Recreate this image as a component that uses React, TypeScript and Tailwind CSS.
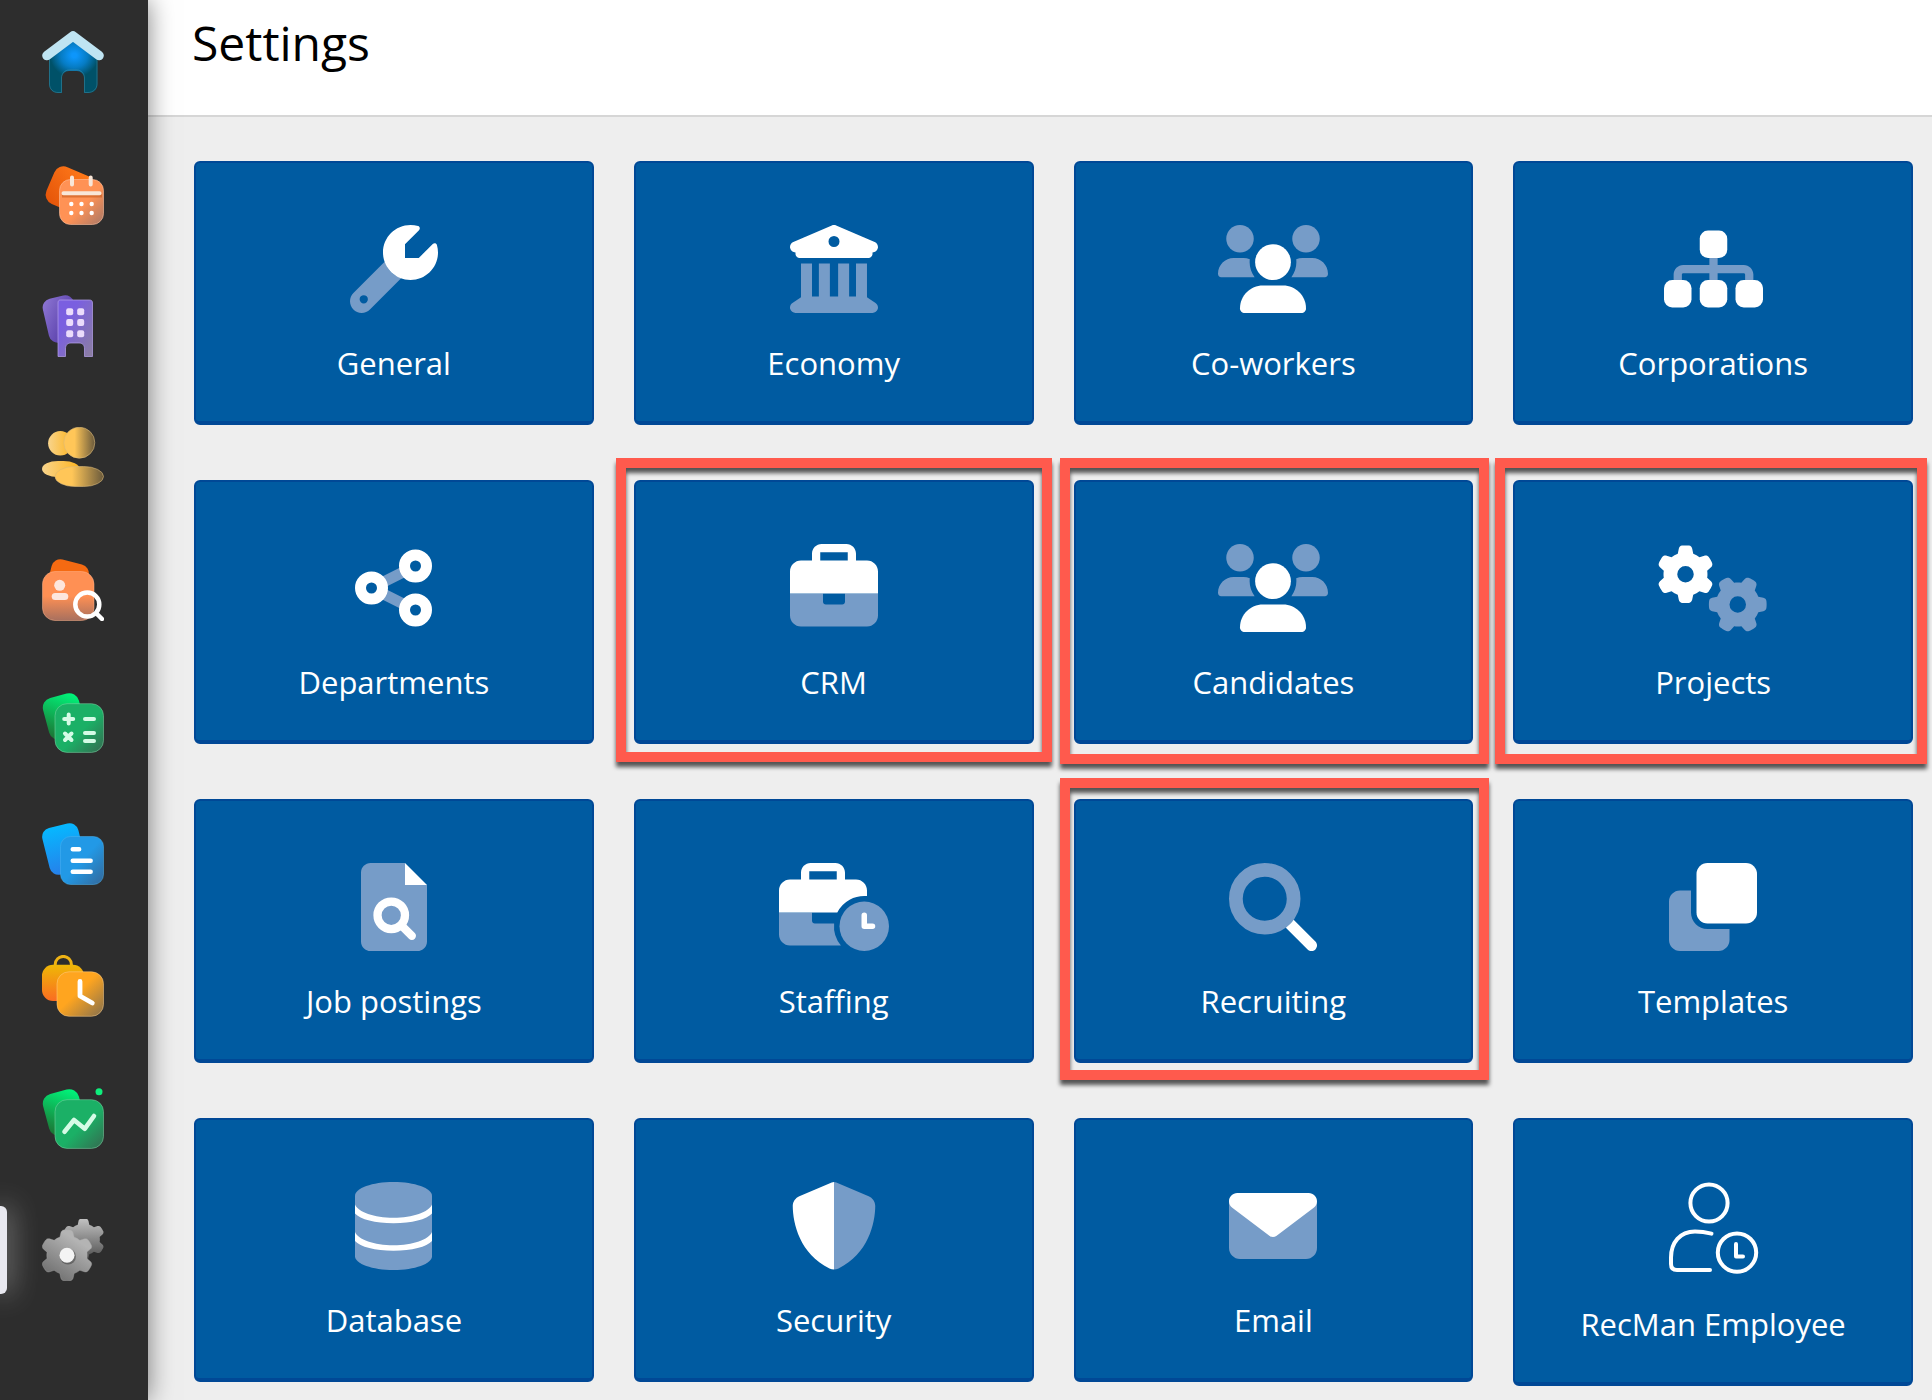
import type { ReactNode } from "react";
import clsx from "clsx";

const GEAR =
  "M308.5 135.3c7.1-6.3 9.9-16.2 6.2-25c-2.3-5.3-4.8-10.5-7.6-15.5L304 89.4c-3-5-6.3-9.9-9.8-14.6c-5.7-7.6-15.7-10.1-24.7-7.1l-28.2 9.3c-10.7-8.8-23-16-36.2-20.9L199 27.1c-1.9-9.3-9.1-16.7-18.5-17.8C173.9 8.4 167.2 8 160.4 8h-.7c-6.8 0-13.5 .4-20.1 1.2c-9.4 1.1-16.6 8.6-18.5 17.8L115 56.1c-13.3 5-25.5 12.1-36.2 20.9L50.5 67.8c-9-3-19-.5-24.7 7.1c-3.5 4.7-6.8 9.6-9.9 14.6l-3 5.3c-2.8 5-5.3 10.2-7.6 15.6c-3.7 8.7-.9 18.6 6.2 25l22.2 19.8C32.6 161.9 32 168.9 32 176s.6 14.1 1.7 20.9L11.5 216.7c-7.1 6.3-9.9 16.2-6.2 25c2.3 5.3 4.8 10.5 7.6 15.6l3 5.2c3 5.1 6.3 9.9 9.9 14.6c5.7 7.6 15.7 10.1 24.7 7.1l28.2-9.3c10.7 8.8 23 16 36.2 20.9l6.1 29.1c1.9 9.3 9.1 16.7 18.5 17.8c6.7 .8 13.5 1.2 20.4 1.2s13.7-.4 20.4-1.2c9.4-1.1 16.6-8.6 18.5-17.8l6.1-29.1c13.3-5 25.5-12.1 36.2-20.9l28.2 9.3c9 3 19 .5 24.7-7.1c3.5-4.7 6.8-9.5 9.8-14.6l3.1-5.4c2.8-5 5.3-10.2 7.6-15.5c3.7-8.7 .9-18.6-6.2-25l-22.2-19.8c1.1-6.8 1.7-13.8 1.7-20.9s-.6-14.1-1.7-20.9l22.2-19.8z";
const GEAR_HOLE = "M112 176a48 48 0 1 0 96 0 48 48 0 1 0 -96 0z";

// second tone of the duotone icons
const TONE = "#769cc8";

function Duo({ width = 512, children }: { width?: number; children: ReactNode }) {
  return (
    <svg viewBox={`0 0 ${width} 512`} className="h-22 w-auto" fill="#fff" aria-hidden="true">
      {children}
    </svg>
  );
}

const wrench = (
  <Duo>
    <path
      fill={TONE}
      fillRule="evenodd"
      d="M201.5 214.5L19.9 396.1C7.2 408.8 0 426.1 0 444.1C0 481.6 30.4 512 67.9 512c18 0 35.3-7.2 48-19.9L297.5 310.5c-44-16-80-50-96-96zM80 408a24 24 0 1 1 0 48 24 24 0 1 1 0-48z"
    />
    <path d="M352 320c88.4 0 160-71.6 160-160c0-15.3-2.2-30.1-6.2-44.2c-3.1-10.8-16.4-13.2-24.3-5.3L400 192H320V112l81.5-81.5c7.9-7.9 5.4-21.2-5.3-24.3C382.1 2.2 367.3 0 352 0C263.6 0 192 71.6 192 160s71.6 160 160 160z" />
  </Duo>
);

const bank = (
  <Duo>
    <path
      fill={TONE}
      d="M128 224H64V420.3c-.6 .3-1.2 .7-1.8 1.1l-48 32c-11.7 7.8-17 22.4-12.9 35.9S17.9 512 32 512H480c14.1 0 26.5-9.2 30.6-22.7s-1.1-28.1-12.9-35.9l-48-32c-.6-.4-1.2-.7-1.8-1.1V224H384V416H344V224H280V416H232V224H168V416H128V224z"
    />
    <path
      fillRule="evenodd"
      d="M243.4 2.6l-224 96c-14 6-21.8 21-18.7 35.8S16.8 160 32 160v8c0 13.3 10.7 24 24 24H456c13.3 0 24-10.7 24-24v-8c15.2 0 28.3-10.7 31.3-25.6s-4.8-29.9-18.7-35.8l-224-96c-8-3.4-17.2-3.4-25.2 0zM256 64a32 32 0 1 1 0 64 32 32 0 1 1 0-64z"
    />
  </Duo>
);

const people = (
  <Duo width={640}>
    <g fill={TONE}>
      <circle cx="128" cy="80" r="80" />
      <circle cx="512" cy="80" r="80" />
      <path d="M0 283.4C0 233 40.8 192 91.4 192H148c13 0 25.6 2.7 36.9 7.6c-.6 5.5-.9 11-.9 16.6c0 32 11 61 29 87.8H18.3C8.2 304 0 295 0 283.4z" />
      <path d="M640 283.4C640 233 599.2 192 548.6 192H492c-13 0-25.6 2.7-36.9 7.6c.6 5.5 .9 11 .9 16.6c0 32-11 61-29 87.8H621.7C631.8 304 640 295 640 283.4z" />
    </g>
    <circle cx="320" cy="216" r="104" />
    <path d="M128 485.3C128 411.7 187.7 352 261.3 352H378.7C452.3 352 512 411.7 512 485.3c0 14.7-11.9 26.7-26.7 26.7H154.7c-14.7 0-26.7-11.9-26.7-26.7z" />
  </Duo>
);

const sitemap = (
  <Duo width={576}>
    <path
      fill={TONE}
      d="M264 180h48v52h152c30.9 0 56 25.1 56 56v44h-48v-44c0-4.4-3.6-8-8-8H312v52h-48v-52H112c-4.4 0-8 3.6-8 8v44H56v-44c0-30.9 25.1-56 56-56h152z"
    />
    <rect x="208" y="32" width="160" height="160" rx="48" />
    <rect x="0" y="320" width="160" height="160" rx="48" />
    <rect x="208" y="320" width="160" height="160" rx="48" />
    <rect x="416" y="320" width="160" height="160" rx="48" />
  </Duo>
);

const nodes = (
  <Duo width={448}>
    <path d="M167 220L280 164M167 292L280 348" stroke={TONE} strokeWidth="64" />
    <g fill="none" stroke="#fff" strokeWidth="64">
      <circle cx="96" cy="256" r="64" />
      <circle cx="352" cy="128" r="64" />
      <circle cx="352" cy="384" r="64" />
    </g>
  </Duo>
);

const briefcase = (
  <Duo>
    <path
      fill={TONE}
      d="M0 288h192v48c0 8.8 7.2 16 16 16h96c8.8 0 16-7.2 16-16v-48h192v128c0 35.3-28.7 64-64 64H64c-35.3 0-64-28.7-64-64z"
    />
    <path
      fillRule="evenodd"
      d="M176 48H336V96H176zM128 56V96H64C28.7 96 0 124.7 0 160v128h512V160c0-35.3-28.7-64-64-64H384V56c0-30.9-25.1-56-56-56H184c-30.9 0-56 25.1-56 56z"
    />
  </Duo>
);

const gears = (
  <Duo width={640}>
    <path fillRule="evenodd" d={GEAR + GEAR_HOLE} />
    <path fill={TONE} fillRule="evenodd" transform="translate(464 352) rotate(90) translate(-160 -176)" d={GEAR + GEAR_HOLE} />
  </Duo>
);

const fileSearch = (
  <Duo width={384}>
    <path fill={TONE} d="M0 56C0 25 25 0 56 0H256V128H384V456c0 31-25 56-56 56H56c-31 0-56-25-56-56z" />
    <path d="M256 0V128H384z" />
    <circle cx="176" cy="304" r="80" fill="none" stroke="#fff" strokeWidth="48" />
    <path d="M236 364l60 60" stroke="#fff" strokeWidth="48" strokeLinecap="round" />
  </Duo>
);

const briefcaseClock = (
  <Duo width={640}>
    <path
      fill={TONE}
      d="M0 288h192v48c0 8.8 7.2 16 16 16h112.7A176 176 0 0 0 360.2 480H64c-35.3 0-64-28.7-64-64z"
    />
    <path
      fillRule="evenodd"
      d="M176 48H336V96H176zM128 56V96H64C28.7 96 0 124.7 0 160v128H339.2A176 176 0 0 1 512 192.7V160c0-35.3-28.7-64-64-64H384V56c0-30.9-25.1-56-56-56H184c-30.9 0-56 25.1-56 56z"
    />
    <circle cx="496" cy="368" r="144" fill={TONE} />
    <path d="M496 304v64h48" fill="none" stroke="#fff" strokeWidth="32" strokeLinecap="round" strokeLinejoin="round" />
  </Duo>
);

const magnifier = (
  <Duo>
    <circle cx="208" cy="208" r="168" fill="none" stroke={TONE} strokeWidth="80" />
    <path d="M330.7 376L457.4 502.6c12.5 12.5 32.8 12.5 45.3 0s12.5-32.8 0-45.3L376 330.7C363.3 348 348 363.3 330.7 376z" />
  </Duo>
);

const clone = (
  <Duo>
    <path
      fill={TONE}
      d="M64 160h64v128c0 53 43 96 96 96h128v64c0 35.3-28.7 64-64 64H64c-35.3 0-64-28.7-64-64V224c0-35.3 28.7-64 64-64z"
    />
    <rect x="160" y="0" width="352" height="352" rx="64" />
  </Duo>
);

const database = (
  <Duo width={448}>
    <path fill={TONE} d="M0 80C0 35.8 100.3 0 224 0s224 35.8 224 80v352c0 44.2-100.3 80-224 80S0 476.2 0 432z" />
    <path d="M0 131C18 176 112 208 224 208s206-32 224-77v52c-30 34-118 57-224 57S30 217 0 183z" />
    <path d="M0 291C18 336 112 368 224 368s206-32 224-77v52c-30 34-118 57-224 57S30 377 0 343z" />
  </Duo>
);

const shield = (
  <Duo>
    <path fill={TONE} d="M256 0c4.7 0 9.2 1 13.4 2.9L457.7 82.8c22 9.3 38.4 31 38.3 57.2c-.5 99.2-41.3 280.7-213.6 363.2c-8.4 4-17.4 6-26.4 6z" />
    <path d="M256 0c-4.7 0-9.2 1-13.4 2.9L54.3 82.8c-22 9.3-38.4 31-38.3 57.2c.5 99.2 41.3 280.7 213.6 363.2c8.4 4 17.4 6 26.4 6z" />
  </Duo>
);

const envelope = (
  <Duo>
    <path fill={TONE} d="M0 112H512V384c0 35.3-28.7 64-64 64H64c-35.3 0-64-28.7-64-64z" />
    <path d="M48 64C21.5 64 0 85.5 0 112c0 15.1 7.1 29.3 19.2 38.4L236.8 313.6c11.4 8.5 27 8.5 38.4 0L492.8 150.4c12.1-9.1 19.2-23.3 19.2-38.4c0-26.5-21.5-48-48-48H48z" />
  </Duo>
);

const employee = (
  <svg
    viewBox="0 0 92 92"
    className="size-23"
    fill="none"
    stroke="#fff"
    strokeWidth="4"
    strokeLinecap="round"
    strokeLinejoin="round"
    aria-hidden="true"
  >
    <circle cx="42" cy="21" r="18.6" />
    <path d="M44.5 51.6C39 50.2 33.5 49.4 28 49.4C13 49.4 4 60.5 4 75.5V82c0 3.8 2.2 6 6 6H43" />
    <circle cx="70" cy="70.6" r="19.2" />
    <path d="M69 62v12.5h7" />
  </svg>
);

type Tile = { label: string; icon: ReactNode; frame?: string };

const TILES: Tile[] = [
  { label: "General", icon: wrench },
  { label: "Economy", icon: bank },
  { label: "Co-workers", icon: people },
  { label: "Corporations", icon: sitemap },
  { label: "Departments", icon: nodes },
  { label: "CRM", icon: briefcase, frame: "-top-6 -right-5 -bottom-[22px] -left-5" },
  { label: "Candidates", icon: people, frame: "-top-6 -right-[18px] -bottom-6 -left-4" },
  { label: "Projects", icon: gears, frame: "-top-6 -right-4 -bottom-6 -left-5" },
  { label: "Job postings", icon: fileSearch },
  { label: "Staffing", icon: briefcaseClock },
  { label: "Recruiting", icon: magnifier, frame: "-top-[23px] -right-[18px] -bottom-[21px] -left-4" },
  { label: "Templates", icon: clone },
  { label: "Database", icon: database },
  { label: "Security", icon: shield },
  { label: "Email", icon: envelope },
  { label: "RecMan Employee", icon: employee },
];

function SettingsTile({ label, icon, frame }: Tile) {
  return (
    <a
      href="#"
      className="relative flex flex-col items-center rounded-md border-2 border-b-4 border-[#004896] bg-[#005ba1] pt-[62px] pb-9 text-white"
    >
      {icon}
      <span className="mt-7 text-[31px] leading-[44px]">{label}</span>
      {frame && (
        <span
          className={clsx(
            "pointer-events-none absolute border-10 border-[#ff5a4d] drop-shadow-[0_5px_2px_rgba(0,0,0,0.65)]",
            frame,
          )}
        />
      )}
    </a>
  );
}

function Glyph({ children }: { children: ReactNode }) {
  return (
    <svg viewBox="0 0 62 62" className="size-[62px]" fill="none" aria-hidden="true">
      {children}
    </svg>
  );
}

type GradProps = { id: string; from: string; to: string; mid?: number; dir?: "d" | "v" | "h" | "u" };

function Grad({ id, from, to, mid = 0, dir = "d" }: GradProps) {
  const [x1, y1, x2, y2] = { d: [0, 0, 1, 1], v: [0, 0, 0, 1], h: [0, 0, 1, 0], u: [0.8, 0, 0.2, 1] }[dir];
  return (
    <linearGradient id={id} x1={x1} y1={y1} x2={x2} y2={y2}>
      <stop offset={mid} stopColor={from} />
      <stop offset="1" stopColor={to} />
    </linearGradient>
  );
}

const home = (
  <Glyph>
    <defs>
      <radialGradient id="home-a" cx="0.52" cy="0.32" r="0.5" gradientTransform="translate(0 .06) scale(1 .8)">
        <stop offset="0.1" stopColor="#0d96fb" />
        <stop offset="0.55" stopColor="#067cc4" />
        <stop offset="1" stopColor="#005168" />
      </radialGradient>
    </defs>
    <path
      d="M7 24L31 7L55.5 24V53c0 5-3.5 9-9 9H42V47c0-4-3.5-7-7-7h-8c-4 0-7 3-7 7v15h-4c-5 0-9-4-9-9z"
      fill="url(#home-a)"
    />
    <path
      d="M7.5 26V53c0 5 3.5 8.5 8.5 8.5h3.5V47c0-4.5 3.5-8 7.5-8h8c4 0 7.5 3.5 7.5 8v14.5H46c5 0 9-3.5 9-8.5V26"
      stroke="#4fa0b8"
      strokeOpacity="0.4"
    />
    <path d="M5 24.5L31 5L57 24.5" stroke="#bfe4f2" strokeWidth="9.6" strokeLinecap="round" strokeLinejoin="round" />
  </Glyph>
);

const calendar = (
  <Glyph>
    <defs>
      <Grad id="cal-a" from="#ff7a1a" to="#e6560a" dir="u" />
      <Grad id="cal-b" from="#ff9255" to="#a87868" mid={0.55} />
    </defs>
    <rect x="7" y="6.5" width="43" height="40" rx="10" transform="rotate(23 27 26)" fill="url(#cal-a)" />
    <rect x="17.5" y="16.5" width="44" height="45" rx="11" fill="url(#cal-b)" stroke="#ffc09c" strokeOpacity="0.6" />
    <path d="M20 33h40" stroke="#c85a1c" strokeOpacity="0.6" strokeWidth="3" />
    <path d="M30 14.5v7M48.7 14.5v7M21.5 30.3h36" stroke="#f8e6d8" strokeWidth="4" strokeLinecap="round" />
    <g fill="#fff">
      {[41, 50].map((cy) => [29.3, 39.5, 49.7].map((cx) => <circle key={`${cx}-${cy}`} cx={cx} cy={cy} r="2.2" />))}
    </g>
  </Glyph>
);

const building = (
  <Glyph>
    <defs>
      <Grad id="bld-a" from="#9079d6" to="#3f2495" />
      <Grad id="bld-b" from="#7a5fe0" to="#8c7fa0" mid={0.3} />
    </defs>
    <rect x="3.5" y="1.5" width="32" height="45" rx="9" transform="rotate(-13 19.5 24)" fill="url(#bld-a)" />
    <path
      d="M18.5 5h29c2 0 3 1 3 3v53.5H42.5V54c0-4-2-6-5.5-6h-8c-3.5 0-5.5 2-5.5 6v7.5H16V8c0-2 .8-3 2.5-3z"
      fill="url(#bld-b)"
      stroke="#b6a2ec"
      strokeOpacity="0.7"
    />
    <g fill="#ebdcfb">
      {[13.2, 24, 35.2].map((y) => [24.2, 35.2].map((x) => <rect key={`${x}-${y}`} x={x} y={y} width="7" height="7" rx="2" />))}
    </g>
  </Glyph>
);

const contacts = (
  <Glyph>
    <defs>
      <Grad id="con-a" from="#f8d48c" to="#fdb420" dir="h" />
      <Grad id="con-b" from="#ffc658" to="#6a5a3c" mid={0.35} dir="h" />
    </defs>
    <circle cx="18.3" cy="16.3" r="12.2" fill="url(#con-a)" />
    <circle cx="37.3" cy="15.7" r="15.5" fill="url(#con-b)" stroke="#d8b878" strokeOpacity="0.6" />
    <rect x="0" y="34" width="37.5" height="16" rx="16" ry="8" fill="url(#con-a)" />
    <rect x="13" y="39.5" width="48.5" height="20" rx="20" ry="10" fill="url(#con-b)" stroke="#d8b878" strokeOpacity="0.6" />
  </Glyph>
);

const candidateSearch = (
  <Glyph>
    <defs>
      <Grad id="cs-a" from="#ff9054" to="#a8705e" mid={0.5} dir="v" />
    </defs>
    <rect x="6.5" y="2.5" width="38" height="38" rx="9" transform="rotate(14 26 22)" fill="#f56a12" />
    <rect x="0.5" y="12.5" width="51.5" height="49" rx="12.5" fill="url(#cs-a)" stroke="#ffb48c" strokeOpacity="0.5" />
    <circle cx="17.7" cy="26.3" r="5.5" fill="#fde6dd" />
    <rect x="9.7" y="34" width="16.6" height="7" rx="3.5" fill="#fde6dd" />
    <circle cx="45.3" cy="45.5" r="12" stroke="#fff" strokeWidth="4.5" />
    <path d="M54.5 54.5l5.5 5.5" stroke="#fff" strokeWidth="4.5" strokeLinecap="round" />
  </Glyph>
);

// two stacked green cards, shared by the calculator and the statistics icons
function GreenCards({ id }: { id: string }) {
  return (
    <>
      <defs>
        <Grad id={`${id}-a`} from="#00f47a" to="#1c7434" dir="u" />
        <Grad id={`${id}-b`} from="#1bb066" to="#356a50" mid={0.55} />
      </defs>
      <rect x="3.5" y="4" width="37" height="43" rx="10" transform="rotate(-15 22 25.5)" fill={`url(#${id}-a)`} />
      <rect x="13" y="12.7" width="48.5" height="48.7" rx="12" fill={`url(#${id}-b)`} stroke="#7fd8a8" strokeOpacity="0.5" />
    </>
  );
}

const calculator = (
  <Glyph>
    <GreenCards id="calc" />
    <path
      d="M26.7 23.5v9M22.2 28h9M43 28h9M43 42h9M43 50h9M23 42.5l6.5 6.5M29.5 42.5L23 49"
      stroke="#d5fbe6"
      strokeWidth="4"
      strokeLinecap="round"
    />
  </Glyph>
);

const documents = (
  <Glyph>
    <defs>
      <Grad id="doc-a" from="#06b8ff" to="#2680ea" dir="v" />
      <Grad id="doc-b" from="#2299e6" to="#34689a" mid={0.5} />
    </defs>
    <rect x="3.5" y="2" width="37" height="48" rx="9" transform="rotate(-14 22 26)" fill="url(#doc-a)" />
    <rect x="18.5" y="13.5" width="43" height="48" rx="10" fill="url(#doc-b)" stroke="#4cb4f0" strokeOpacity="0.5" />
    <path d="M30.7 26.3h6.5M30.7 37.7h18M30.7 48.7h18" stroke="#fff" strokeWidth="4.4" strokeLinecap="round" />
  </Glyph>
);

const staffing = (
  <Glyph>
    <defs>
      <Grad id="stf-a" from="#efb806" to="#fa6c22" dir="v" />
      <Grad id="stf-b" from="#ffa51f" to="#85704f" mid={0.45} />
    </defs>
    <path d="M13.2 11v-1.5a8.1 8.1 0 0 1 16.2 0V11" stroke="#efb315" strokeWidth="3" />
    <rect x="0" y="9.7" width="42" height="36.3" rx="11" fill="url(#stf-a)" />
    <rect x="15" y="16.8" width="46.5" height="44.5" rx="12" fill="url(#stf-b)" stroke="#ffd08a" strokeOpacity="0.5" />
    <path d="M38 26.5V41l12.3 7" stroke="#fff" strokeWidth="4.8" strokeLinecap="round" strokeLinejoin="round" />
  </Glyph>
);

const statistics = (
  <Glyph>
    <GreenCards id="stat" />
    <circle cx="57" cy="4.7" r="3.5" fill="#0eee7c" />
    <path d="M22.5 44.7L32 33l10.7 8.8L52 29" stroke="#d5fbe6" strokeWidth="4.6" strokeLinecap="round" strokeLinejoin="round" />
  </Glyph>
);

const settings = (
  <Glyph>
    <defs>
      <Grad id="set-a" from="#c2c2c2" to="#4c4c4c" dir="v" />
      <Grad id="set-b" from="#b4b4b4" to="#6c6c6c" mid={0.2} dir="u" />
    </defs>
    <path d={GEAR} transform="translate(41.5 20.5) scale(.128 .124) translate(-160 -176)" fill="url(#set-a)" />
    <path
      d={GEAR}
      transform="translate(25 36.3) scale(.158 .152) translate(-160 -176)"
      fill="url(#set-b)"
      stroke="#a8a8a8"
      strokeOpacity="0.5"
      strokeWidth="5"
    />
    <circle cx="26" cy="37.5" r="8" fill="#000" fillOpacity="0.3" />
    <circle cx="25" cy="36.3" r="7.5" fill="#f4f4f4" />
  </Glyph>
);

const NAV = [
  { label: "Home", icon: home },
  { label: "Calendar", icon: calendar },
  { label: "Companies", icon: building },
  { label: "Contacts", icon: contacts },
  { label: "Candidates", icon: candidateSearch },
  { label: "Calculator", icon: calculator },
  { label: "Documents", icon: documents },
  { label: "Staffing", icon: staffing },
  { label: "Statistics", icon: statistics },
  { label: "Settings", icon: settings, active: true },
];

function Sidebar() {
  return (
    <nav className="z-10 w-[148px] shrink-0 bg-[#2d2d2d] pt-[31px] shadow-[0_0_24px_rgba(0,0,0,0.5)]">
      <ul className="flex flex-col gap-[70px]">
        {NAV.map((item) => (
          <li key={item.label} className="relative pl-[42px]">
            {item.active && (
              <span className="absolute -inset-y-[13px] left-0 w-[7px] rounded-r-md bg-[#e8e8ef] shadow-[0_0_28px_rgba(255,255,255,0.8)]" />
            )}
            <a href="#" aria-label={item.label} aria-current={item.active ? "page" : undefined} className="block w-[62px]">
              {item.icon}
            </a>
          </li>
        ))}
      </ul>
    </nav>
  );
}

export default function App() {
  return (
    <div className="flex min-h-screen bg-[#eee] font-['Open_Sans',sans-serif]">
      <Sidebar />
      <div className="min-w-0 flex-1">
        <header className="border-b-2 border-[#d6d6d6] bg-white px-11 pt-[9px] pb-[38px]">
          <h1 className="text-[48px] leading-[68px] text-black">Settings</h1>
        </header>
        <main className="grid grid-cols-4 items-start gap-x-10 gap-y-[55px] pt-11 pr-[19px] pb-3 pl-[46px]">
          {TILES.map((tile) => (
            <SettingsTile key={tile.label} {...tile} />
          ))}
        </main>
      </div>
    </div>
  );
}
